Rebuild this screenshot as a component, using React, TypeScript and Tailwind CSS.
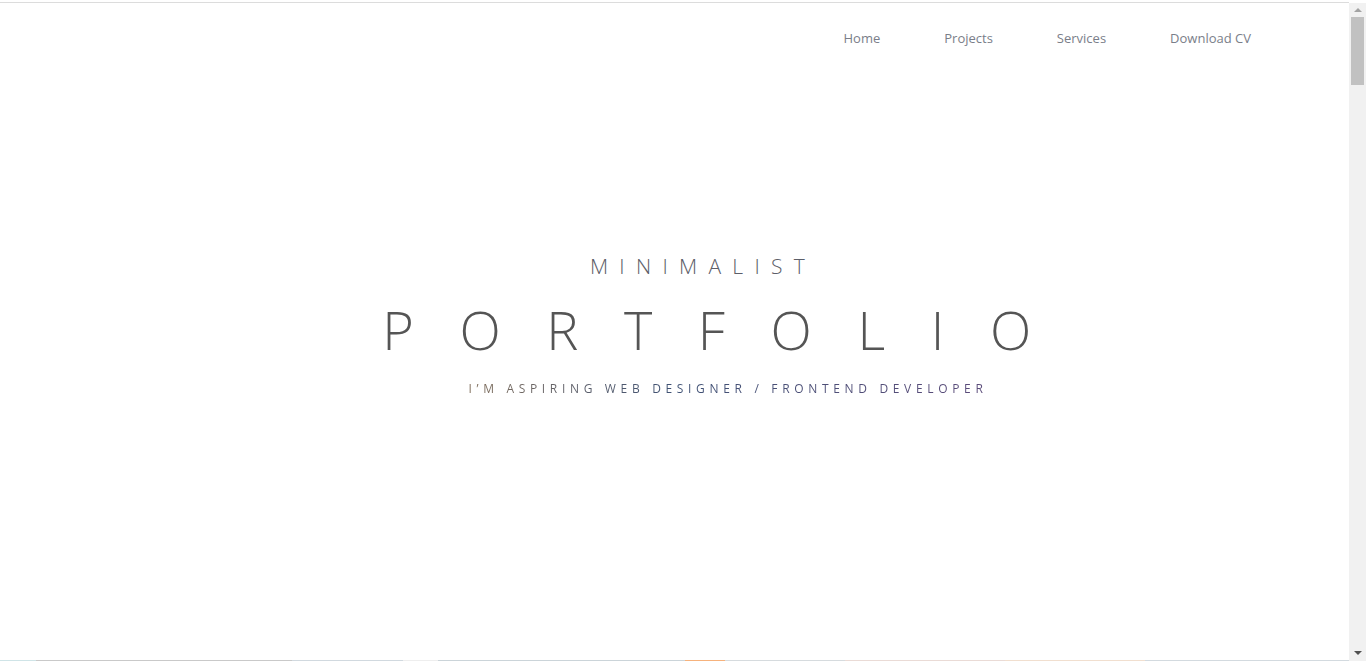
import React from "react";

const navItems = ["Home", "Projects", "Services", "Download CV"];

const strip = [
  { w: "w-[36px]", c: "bg-[#cfe4e7]" },
  { w: "w-[256px]", c: "bg-[#c9c9c9]" },
  { w: "w-[111px]", c: "bg-[#d1d9df]" },
  { w: "w-[35px]", c: "bg-[#eeeeee]" },
  { w: "w-[247px]", c: "bg-[#cbd4d9]" },
  { w: "w-[40px]", c: "bg-[#f6b27c]" },
  { w: "w-[120px]", c: "bg-[#d6dbde]" },
  { w: "w-[160px]", c: "bg-[#eadbd6]" },
  { w: "w-[140px]", c: "bg-[#f1dfcf]" },
  { w: "flex-1", c: "bg-[#d3dadf]" },
];

const Scrollbar = () => (
  <aside className="sticky top-0 h-screen w-[17px] shrink-0 flex flex-col bg-[#f1f1f1]">
    <div className="h-[3px] bg-white" />
    <div className="h-[14px] flex items-center justify-center">
      <div className="w-0 h-0 border-l-[4px] border-r-[4px] border-b-[4px] border-l-transparent border-r-transparent border-b-[#a3a3a3]" />
    </div>
    <div className="mx-[2px] h-[68px] bg-[#c1c1c1]" />
    <div className="flex-1" />
    <div className="h-[17px] flex items-center justify-center">
      <div className="w-0 h-0 border-l-[4px] border-r-[4px] border-t-[4px] border-l-transparent border-r-transparent border-t-[#505050]" />
    </div>
  </aside>
);

const App = () => {
  return (
    <div className="flex bg-white font-['Open_Sans',sans-serif]">
      <main className="flex-1 min-w-0">
        <div className="h-[2px]" />
        <div className="h-px bg-[#dcdcdc]" />
        <section className="h-[657px] flex flex-col">
          <nav className="flex justify-end gap-[64px] pr-[98px] pt-[26px] text-[13px] text-[#7a7e89]">
            {navItems.map((item) => (
              <a key={item} href="#" className="leading-[18px]">
                {item}
              </a>
            ))}
          </nav>
          <div className="flex flex-col items-center mt-[205px]">
            <h2 className="pl-[57px] text-[21px] font-light tracking-[11.3px] leading-[28px] text-[#5c5e68]">
              MINIMALIST
            </h2>
            <h1 className="mt-[14px] pl-[110px] text-[54px] font-light tracking-[45.6px] leading-[70px] text-[#555555]">
              PORTFOLIO
            </h1>
            <p className="mt-[16px] pl-[107px] text-[12px] tracking-[4.67px] leading-[18px] bg-gradient-to-r from-[#a27a42] via-[#3e5174] to-[#5b4b7a] bg-clip-text text-transparent">
              I’M ASPIRING WEB DESIGNER / FRONTEND DEVELOPER
            </p>
          </div>
        </section>
        <section className="flex h-[420px]">
          {strip.map((s, i) => (
            <div key={i} className={`${s.w} ${s.c} h-full`} />
          ))}
        </section>
      </main>
      <Scrollbar />
    </div>
  );
};

export default App;
